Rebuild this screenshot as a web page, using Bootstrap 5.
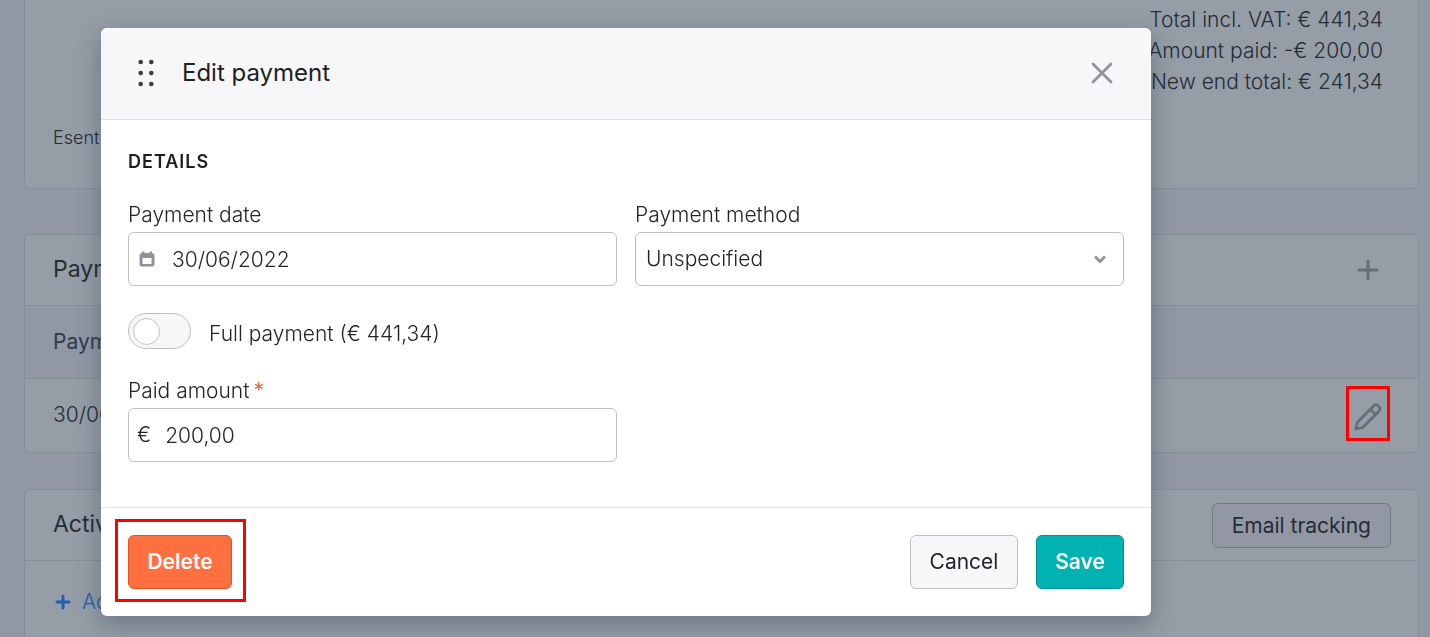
<!DOCTYPE html>
<html lang="en">
<head>
<meta charset="utf-8">
<meta name="viewport" content="width=device-width, initial-scale=1">
<title>Edit payment</title>
<link href="https://cdn.jsdelivr.net/npm/bootstrap@5.3.0/dist/css/bootstrap.min.css" rel="stylesheet">
<style>
  body { font-family: Inter, "Liberation Sans", sans-serif; font-size: 21px; font-weight: 350; line-height: 32px; background: #9197a3; color: #242c36; height: 100vh; overflow: hidden; }
  .page { padding: 0 11px 0 24px; height: 100vh; overflow: hidden; }
  .panel { background: #959da6; border: 1px solid #868e9b; border-radius: 6px; margin-bottom: 36px; }
  .panel-totals { border-top: 0; border-radius: 0 0 6px 6px; padding: 4px 35px 34px 28px; margin-bottom: 45px; }
  .totals { line-height: 31px; }
  .note { font-size: 18px; line-height: 32px; margin-top: 25px; }
  .panel-head { min-height: 71px; padding: 0 27px 0 28px; border-bottom: 1px solid #868e9b; }
  .panel-head h2 { font-size: 23px; font-weight: 400; margin: 0; }
  .panel-table { width: 100%; }
  .panel-table th { height: 72px; padding: 0 28px; }
  .panel-table td { height: 74px; padding: 0 36px 0 28px; }
  .panel-table th { background: #9197a3; border-bottom: 1px solid #868e9b; font-weight: 400; color: #2c3c50; }
  .icon-btn { background: none; border: 0; padding: 0; color: #656e7a; display: inline-flex; }
  .close-btn { color: #92929c; }
  .tracking-btn { background: #9197a3; border: 1px solid #737a87; border-radius: 6px; color: #242c36; font-size: 21px; line-height: 31px; padding: 6px 19px; }
  .add-link { color: #215fae; text-decoration: none; padding: 25px 28px; gap: 9px; }
  .marked { position: relative; display: inline-flex; }
  .marked::after { content: ""; position: absolute; inset: -16px -14px -13px -13px; border: 3px solid #f00; pointer-events: none; }
  .marked-icon::after { inset: -17px -8px -10px -8px; }

  .edit-dialog { max-width: 1050px; margin: 28px 0 0 101px; }
  .edit-dialog .modal-content { border: 0; border-radius: 6px; color: #242529; box-shadow: 0 8px 24px rgba(40, 56, 72, .38); }
  .edit-dialog .modal-header { background: #f7f7fa; border-bottom: 1px solid #e1e1e1; border-radius: 6px 6px 0 0; padding: 29px 37px 30px; }
  .edit-dialog .modal-title { font-size: 24px; font-weight: 400; line-height: 32px; color: #1e1f23; margin-left: 28px; }
  .edit-dialog .modal-body { padding: 26px 27px 45px; }
  .edit-dialog .modal-footer { padding: 27px; border-top: 1px solid #e1e1e1; gap: 18px; }
  .edit-dialog .modal-footer > * { margin: 0; }
  .section-title { font-size: 18px; font-weight: 600; letter-spacing: 1px; line-height: 32px; margin: 0 0 21px; color: #1e1f23; }
  .fields { --bs-gutter-x: 18px; }
  .field-label { display: block; line-height: 32px; margin-bottom: 1px; }
  .required { color: #ea4b20; margin-left: 4px; }
  .field { height: 54px; border: 1px solid #bfbfc3; border-radius: 6px; background: #fff; padding: 0 9px; gap: 16px; }
  .field .form-control, .pick .form-select { border: 0; padding: 0; font-size: 21px; font-weight: 350; color: #242529; background-color: transparent; box-shadow: none; height: 52px; }
  .field-money { gap: 14px; padding-left: 8px; }
  .pick { padding: 0 15px 0 10px; }
  .pick .form-select { background-size: 16px 16px; background-position: right 0 center; background-image: url("data:image/svg+xml,%3Csvg xmlns='http://www.w3.org/2000/svg' viewBox='0 0 16 16'%3E%3Cpath d='M3 5.500 8 10.500l5-5' fill='none' stroke='%2392929c' stroke-width='2.800'/%3E%3C/svg%3E"); }
  .toggle-row { margin: 27px 0 25px; padding: 0; gap: 18px; }
  .toggle-row .form-check-input { float: none; margin: 0; width: 63px; height: 36px; border: 1px solid #bfbfc3; background-color: #f7f7fa; background-size: 27px 27px; background-position: 4px center; background-repeat: no-repeat; box-shadow: none; background-image: url("data:image/svg+xml,%3Csvg xmlns='http://www.w3.org/2000/svg' viewBox='0 0 27 27'%3E%3Ccircle cx='13.500' cy='13.500' r='13' fill='%23fff' stroke='%23bfbfc3'/%3E%3C/svg%3E"); }
  .toggle-row label { padding-top: 5px; }
  .action { height: 54px; min-width: 88px; border-radius: 6px; font-size: 21px; padding: 0 18px; }
  .action-delete { min-width: 104px; background: #ff7040; border-color: #e8501f; color: #fff; font-weight: 600; }
  .action-cancel { min-width: 108px; background: #f7f7fa; border-color: #c0c0c7; color: #242529; font-weight: 400; }
  .action-save { background: #00b2b2; border-color: #008f92; color: #fff; font-weight: 600; }
</style>
</head>
<body>
<main class="page">
  <section class="panel panel-totals">
    <div class="totals text-end">
      <div>Total incl. VAT: € 441,34</div>
      <div>Amount paid: -€ 200,00</div>
      <div>New end total: € 241,34</div>
    </div>
    <div class="note">Esent</div>
  </section>

  <section class="panel">
    <div class="panel-head d-flex align-items-center justify-content-between">
      <h2>Payments</h2>
      <button class="icon-btn" type="button" aria-label="Add payment">
        <svg class="mx-2" width="30" height="30" viewBox="0 0 30 30" fill="none" stroke="currentColor" stroke-width="3" stroke-linecap="round"><path d="M15 6v18M6 15h18"/></svg>
      </button>
    </div>
    <table class="panel-table">
      <thead><tr><th scope="col">Payment</th><th scope="col"></th></tr></thead>
      <tbody><tr><td>30/06</td><td class="text-end">
        <span class="marked marked-icon align-middle"><button class="icon-btn" type="button" aria-label="Edit payment">
          <svg width="28" height="28" viewBox="0 0 28 28" fill="none" stroke="currentColor" stroke-width="2.800" stroke-linejoin="round"><path d="M2 26 3.300 19.500 19 3.500q2.800-3 5.500-.6 2.900 2.700.2 5.600L8.700 24.500ZM16.500 6.500l5 5"/></svg>
        </button></span>
      </td></tr></tbody>
    </table>
  </section>

  <section class="panel">
    <div class="panel-head d-flex align-items-center justify-content-between">
      <h2>Activities</h2>
      <button class="tracking-btn" type="button">Email tracking</button>
    </div>
    <a class="add-link d-flex align-items-center" href="#">
      <svg width="20" height="20" viewBox="0 0 20 20" fill="none" stroke="currentColor" stroke-width="3" stroke-linecap="round"><path d="M10 4v12M4 10h12"/></svg>
      Add
    </a>
  </section>
</main>

<div class="modal d-block" role="dialog" aria-labelledby="dialogTitle">
  <div class="modal-dialog edit-dialog">
    <form class="modal-content">
      <div class="modal-header justify-content-start">
        <svg width="16" height="32" viewBox="0 0 16 32" fill="#3c3c40"><circle cx="2.700" cy="5" r="2.300"/><circle cx="13.300" cy="5" r="2.300"/><circle cx="2.700" cy="16" r="2.300"/><circle cx="13.300" cy="16" r="2.300"/><circle cx="2.700" cy="27" r="2.300"/><circle cx="13.300" cy="27" r="2.300"/></svg>
        <h1 class="modal-title" id="dialogTitle">Edit payment</h1>
        <button class="icon-btn close-btn ms-auto" type="button" aria-label="Close">
          <svg width="24" height="24" viewBox="0 0 24 24" fill="none" stroke="currentColor" stroke-width="2.800" stroke-linecap="round"><path d="m3 3 18 18M21 3 3 21"/></svg>
        </button>
      </div>
      <div class="modal-body">
        <h2 class="section-title text-uppercase">Details</h2>
        <div class="row fields">
          <div class="col-6">
            <label class="field-label" for="date">Payment date</label>
            <div class="field d-flex align-items-center">
              <svg class="flex-shrink-0" width="18" height="18" viewBox="0 0 18 18"><path fill="#92929c" fill-rule="evenodd" d="M4 1.500h2.500V3h5V1.500H14V3q2.500.3 2.500 2.500v8.500q0 2.500-2.500 2.500H4q-2.500 0-2.500-2.500V5.500Q1.500 3.300 4 3ZM4.500 8v6h9V8Z"/></svg>
              <input class="form-control" id="date" type="text" value="30/06/2022">
            </div>
          </div>
          <div class="col-6">
            <label class="field-label" for="method">Payment method</label>
            <div class="field pick"><select class="form-select" id="method"><option>Unspecified</option></select></div>
          </div>
        </div>
        <div class="form-check form-switch toggle-row d-flex align-items-start">
          <input class="form-check-input" type="checkbox" role="switch" id="full">
          <label for="full">Full payment (€ 441,34)</label>
        </div>
        <div class="row fields">
          <div class="col-6">
            <label class="field-label" for="amount">Paid amount<span class="required">*</span></label>
            <div class="field field-money d-flex align-items-center">
              <span>€</span>
              <input class="form-control" id="amount" type="text" value="200,00">
            </div>
          </div>
        </div>
      </div>
      <div class="modal-footer">
        <div class="marked me-auto"><button class="btn action action-delete" type="button">Delete</button></div>
        <button class="btn action action-cancel" type="button">Cancel</button>
        <button class="btn action action-save" type="button">Save</button>
      </div>
    </form>
  </div>
</div>
<script src="https://cdn.jsdelivr.net/npm/bootstrap@5.3.0/dist/js/bootstrap.bundle.min.js"></script>
</body>
</html>
